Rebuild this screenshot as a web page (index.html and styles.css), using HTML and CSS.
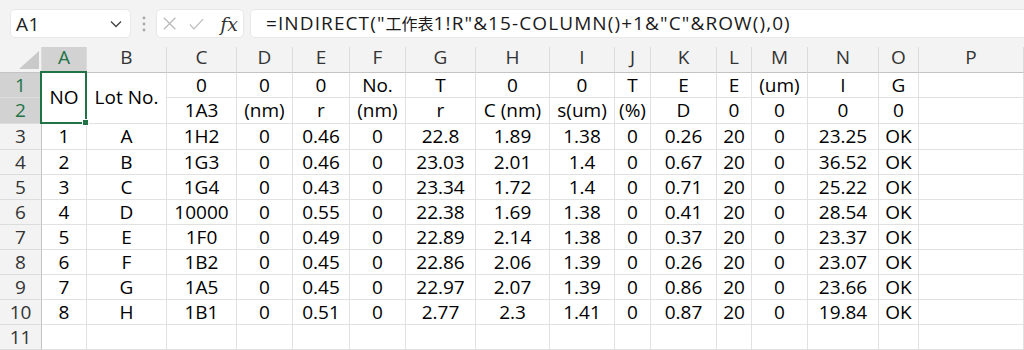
FILE: index.html
```html
<!DOCTYPE html>
<html lang="en">
<head>
  <meta charset="UTF-8" />
  <title>Sheet1</title>
  <link rel="stylesheet" href="styles.css">
</head>
<body>
  <!-- Name box + formula bar -->
  <div class="toolbar">
    <div class="name-box">
      <span>A1</span>
      <svg class="chevron" width="12" height="8" viewBox="0 0 12 8"><polyline points="1,1.5 6,6.5 11,1.5" /></svg>
    </div>
    <svg class="grip" width="4" height="16" viewBox="0 0 4 16">
      <circle cx="2" cy="2" r="1.4" /><circle cx="2" cy="8" r="1.4" /><circle cx="2" cy="14" r="1.4" />
    </svg>
    <div class="fx-box">
      <svg class="fx-icon" width="15" height="15" viewBox="0 0 15 15"><path d="M1 1 L14 14 M14 1 L1 14" /></svg>
      <svg class="fx-icon" width="17" height="14" viewBox="0 0 17 14"><path d="M1 7.5 L5.5 12.5 L16 1.5" /></svg>
      <span class="fx">fx</span>
    </div>
    <div class="formula">=INDIRECT("<span class="cjk">工作表</span>1!R"&amp;15-COLUMN()+1&amp;"C"&amp;ROW(),0)</div>
  </div>

  <div id="sheet" class="sheet"></div>

  <script>
    const sheet = document.getElementById('sheet');
    const cols = 'ABCDEFGHIJKLMNOP'.split('');

    // header rows (row 1 / row 2, columns C..O)
    const row1 = ['0', '0', '0', 'No.', 'T', '0', '0', 'T', 'E', 'E', '(um)', 'I', 'G'];
    const row2 = ['1A3', '(nm)', 'r', '(nm)', 'r', 'C (nm)', 's(um)', '(%)', 'D', '0', '0', '0', '0'];

    const data = [
      ['1', 'A', '1H2', '0', '0.46', '0', '22.8', '1.89', '1.38', '0', '0.26', '20', '0', '23.25', 'OK'],
      ['2', 'B', '1G3', '0', '0.46', '0', '23.03', '2.01', '1.4', '0', '0.67', '20', '0', '36.52', 'OK'],
      ['3', 'C', '1G4', '0', '0.43', '0', '23.34', '1.72', '1.4', '0', '0.71', '20', '0', '25.22', 'OK'],
      ['4', 'D', '10000', '0', '0.55', '0', '22.38', '1.69', '1.38', '0', '0.41', '20', '0', '28.54', 'OK'],
      ['5', 'E', '1F0', '0', '0.49', '0', '22.89', '2.14', '1.38', '0', '0.37', '20', '0', '23.37', 'OK'],
      ['6', 'F', '1B2', '0', '0.45', '0', '22.86', '2.06', '1.39', '0', '0.26', '20', '0', '23.07', 'OK'],
      ['7', 'G', '1A5', '0', '0.45', '0', '22.97', '2.07', '1.39', '0', '0.86', '20', '0', '23.66', 'OK'],
      ['8', 'H', '1B1', '0', '0.51', '0', '2.77', '2.3', '1.41', '0', '0.87', '20', '0', '19.84', 'OK']
    ];

    function cell(text, cls) {
      const d = document.createElement('div');
      d.className = 'cell' + (cls ? ' ' + cls : '');
      d.textContent = text;
      sheet.appendChild(d);
      return d;
    }

    // column headers
    const corner = cell('', 'hdr corner');
    corner.appendChild(document.createElement('div')).className = 'triangle';
    cols.forEach(c => cell(c, 'hdr' + (c === 'A' ? ' sel' : '')));
    cell('', 'hdr');

    // rows 1-2 with merged A/B
    cell('1', 'rowhdr sel');
    cell('NO', 'merged active');
    cell('Lot No.', 'merged');
    row1.forEach(v => cell(v));
    cell(''); cell('');

    cell('2', 'rowhdr sel');
    row2.forEach(v => cell(v));
    cell(''); cell('');

    // data rows
    data.forEach((r, i) => {
      cell(String(i + 3), 'rowhdr');
      r.forEach(v => cell(v));
      cell(''); cell('');
    });

    // empty row 11
    cell('11', 'rowhdr');
    for (let i = 0; i < 17; i++) cell('');
  </script>
</body>
</html>
```

FILE: styles.css
```css
body {
  margin: 0;
  width: 1024px;
  height: 350px;
  overflow: hidden;
  background: #f3f3f3;
  font-family: 'Open Sans', 'Noto Sans CJK TC', sans-serif;
  color: #000;
}

/* Top bar: name box and formula bar */
.toolbar {
  height: 47px;
  box-sizing: border-box;
  padding: 9px 0 9px 10px;
  display: flex;
  align-items: stretch;
  background: #f3f3f3;
}

.name-box,
.fx-box,
.formula {
  background: #fff;
  border: 1px solid #e8e8e8;
  border-radius: 5px;
  box-sizing: border-box;
}

.name-box {
  width: 121px;
  display: flex;
  align-items: center;
  justify-content: space-between;
  padding: 0 8px 0 5px;
  font-size: 19px;
  letter-spacing: 0.5px;
  color: #222;
}

.chevron {
  fill: none;
  stroke: #444;
  stroke-width: 1.3;
}

.grip {
  align-self: center;
  margin: 0 10px 0 11px;
  fill: #a8a8a8;
}

.fx-box {
  width: 88px;
  display: flex;
  align-items: center;
  gap: 13px;
  padding: 0 5px 0 6px;
  margin-right: 6px;
}

.fx-icon {
  fill: none;
  stroke: #b8b8b8;
  stroke-width: 1.3;
}

.fx {
  margin-left: 3px;
  font-family: 'DejaVu Serif', 'Liberation Serif', serif;
  font-style: italic;
  font-size: 19px;
  color: #333;
}

.formula {
  flex: 1;
  margin-right: -10px;
  padding-left: 15px;
  font-size: 19px;
  line-height: 27px;
  letter-spacing: 1.1px;
  color: #1a1a1a;
  white-space: nowrap;
}

.formula .cjk {
  font-size: 16px;
  letter-spacing: 0;
}

/* Grid */
.sheet {
  display: grid;
  grid-template-columns: 42px 45px 80px 70px 56px 57px 56px 70px 74px 65px 36px 66px 35px 56px 71px 40px 105px 20px;
  grid-template-rows: 26px 25px 26px 26px repeat(8, 25px);
  background: #fff;
  font-size: 19px;
}

.cell {
  box-sizing: border-box;
  border-right: 1px solid #e1e1e1;
  border-bottom: 1px solid #e1e1e1;
  text-align: center;
  line-height: 24px;
  white-space: nowrap;
  overflow: hidden;
}

.hdr {
  background: #f3f3f3;
  color: #333;
  line-height: 20px;
  overflow: visible;
  border-right-color: #dcdcdc;
  border-bottom-color: #c4c4c4;
}

.rowhdr {
  background: #f3f3f3;
  color: #333;
  border-right-color: #c4c4c4;
  border-bottom-color: #dcdcdc;
}

.hdr.sel,
.rowhdr.sel {
  background: #d2d2d2;
  color: #217346;
}

.corner {
  display: flex;
  align-items: flex-end;
  justify-content: flex-end;
  padding: 0 2px 3px 0;
}

.triangle {
  width: 20px;
  height: 18px;
  background: #c9c9c9;
  clip-path: polygon(100% 0, 100% 100%, 0 100%);
}

.merged {
  grid-row: span 2;
  display: flex;
  align-items: center;
  justify-content: center;
  padding-bottom: 3px;
}

/* Selected merged cell A1:A2 */
.active {
  position: relative;
  overflow: visible;
}

.active::after {
  content: "";
  position: absolute;
  top: -2px;
  left: -2px;
  right: -1px;
  bottom: -1px;
  border: 2px solid #217346;
}

.active::before {
  content: "";
  position: absolute;
  right: -3px;
  bottom: -3px;
  width: 5px;
  height: 5px;
  background: #217346;
  border: 1px solid #fff;
  z-index: 1;
}
```
